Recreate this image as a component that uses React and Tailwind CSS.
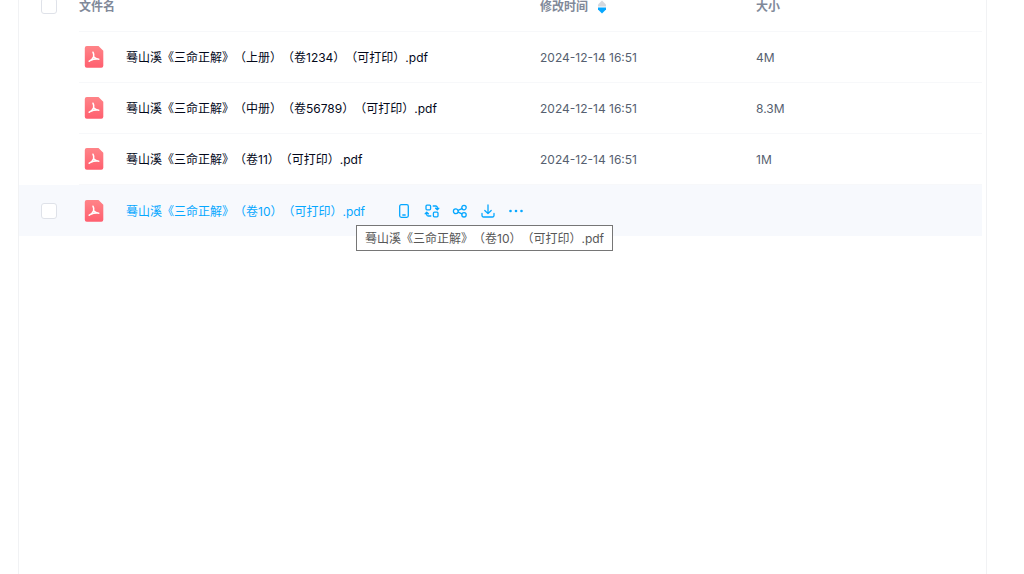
import React from 'react';

const files = [
  { name: '蓦山溪《三命正解》（上册）（卷1234）（可打印）.pdf', time: '2024-12-14 16:51', size: '4M' },
  { name: '蓦山溪《三命正解》（中册）（卷56789）（可打印）.pdf', time: '2024-12-14 16:51', size: '8.3M' },
  { name: '蓦山溪《三命正解》（卷11）（可打印）.pdf', time: '2024-12-14 16:51', size: '1M' },
  { name: '蓦山溪《三命正解》（卷10）（可打印）.pdf', time: '', size: '', active: true },
];

const PdfIcon = () => (
  <svg viewBox="0 0 20 24" className="w-5 h-6 shrink-0" aria-hidden="true">
    <defs>
      <linearGradient id="pdf-fill" x1="0" y1="0" x2="0" y2="1">
        <stop offset="0" stopColor="#ff8488" />
        <stop offset="1" stopColor="#ff5f6f" />
      </linearGradient>
    </defs>
    <path d="M2.800 1h11.700l4.800 4.800v15a2 2 0 0 1-2 2H2.800a2 2 0 0 1-2-2V3a2 2 0 0 1 2-2z" fill="url(#pdf-fill)" />
    <path d="M9 7.200c1 1.400.8 3.200.6 4.600M9.600 11.800c-.8 1.800-2.200 3.600-4.400 4.400M9.600 11.800c1.200 1.500 2.700 2.400 5.200 2.500M6.800 15.200c2-.9 4.200-1.300 6.400-1.200" fill="none" stroke="#fff" strokeWidth="1.500" strokeLinecap="round" strokeLinejoin="round" />
  </svg>
);

const iconProps = {
  viewBox: '0 0 16 16',
  className: 'w-4 h-4',
  fill: 'none',
  stroke: 'currentColor',
  strokeWidth: 1.3,
  strokeLinecap: 'round',
  strokeLinejoin: 'round',
  'aria-hidden': true,
};

const actions = [
  {
    label: '发送到手机',
    icon: (
      <svg {...iconProps}>
        <rect x="3.700" y="1.700" width="8.600" height="12.600" rx="1.500" />
        <path d="M6.800 12h2.400" />
      </svg>
    ),
  },
  {
    label: '转换',
    icon: (
      <svg {...iconProps}>
        <rect x="2" y="2.200" width="4.600" height="4.600" rx="1" />
        <rect x="9.400" y="9.200" width="4.600" height="4.600" rx="1" />
        <path d="M9.200 3h2.600a1.500 1.500 0 0 1 1.500 1.500v2M11.600 5.200l1.700 1.600 1.500-1.600M6.800 13H4.200a1.500 1.500 0 0 1-1.500-1.500v-2M1.200 10.800l1.500-1.600 1.700 1.600" />
      </svg>
    ),
  },
  {
    label: '分享',
    icon: (
      <svg {...iconProps}>
        <circle cx="3.800" cy="8.300" r="2.400" />
        <circle cx="12" cy="4.600" r="2.200" />
        <circle cx="12" cy="11.800" r="2.200" />
        <path d="M6.100 7.400l3.800-1.800M6.200 9.200l3.700 1.700" />
      </svg>
    ),
  },
  {
    label: '下载',
    icon: (
      <svg {...iconProps}>
        <path d="M8 2v8.500M4.800 7.500L8 10.600l3.200-3.100M2 10.500v2A1.500 1.500 0 0 0 3.500 14h9a1.500 1.500 0 0 0 1.500-1.500v-2" />
      </svg>
    ),
  },
  {
    label: '更多',
    icon: (
      <svg viewBox="0 0 16 16" className="w-4 h-4" fill="currentColor" aria-hidden="true">
        <circle cx="2.500" cy="8" r="1.300" />
        <circle cx="8" cy="8" r="1.300" />
        <circle cx="13.500" cy="8" r="1.300" />
      </svg>
    ),
  },
];

const CheckBox = ({ label }) => (
  <input
    type="checkbox"
    aria-label={label}
    className="block w-4 h-4 ml-[22px] appearance-none rounded-[3px] border border-[#dfe2e9] bg-white"
  />
);

const FileRow = ({ file }) => {
  const line = file.active ? '' : 'border-b border-[#f7f8fa]';
  return (
    <tr className={file.active ? 'h-[51px] bg-[#f7f9fd]' : 'h-[51px]'}>
      <td>{file.active && <CheckBox label={file.name} />}</td>
      <td className={line} colSpan={file.active ? 3 : 1}>
        <div className="relative flex items-center pl-[5px]">
          <PdfIcon />
          <a
            href="#file"
            className={file.active ? 'ml-[22px] pt-0.5 text-[#06a7ff]' : 'ml-[22px] pt-0.5 text-[#03081a]'}
          >
            {file.name}
          </a>
          {file.active && (
            <div className="flex gap-3 ml-[31px] text-[#06a7ff]">
              {actions.map((action) => (
                <button key={action.label} type="button" aria-label={action.label}>
                  {action.icon}
                </button>
              ))}
            </div>
          )}
          {file.active && (
            <div
              role="tooltip"
              className="absolute left-[277px] top-[26px] border border-[#767676] bg-white px-2 pt-[5px] pb-[3px] leading-4 text-[#575757] whitespace-nowrap"
            >
              {file.name}
            </div>
          )}
        </div>
      </td>
      {!file.active && <td className={`${line} pt-0.5`}>{file.time}</td>}
      {!file.active && <td className={`${line} pt-0.5`}>{file.size}</td>}
    </tr>
  );
};

const App = () => {
  return (
    <div className="h-screen overflow-hidden bg-white pl-[18px] pr-[37px] font-['Inter','Noto_Sans_CJK_SC',sans-serif] text-xs text-[#565f70] [text-spacing-trim:space-all]">
      <div className="h-full overflow-hidden border-x border-[#f1f2f4] pr-1">
        <table className="-mt-5 w-full table-fixed border-separate border-spacing-0 text-left">
          <colgroup>
            <col className="w-[60px]" />
            <col />
            <col className="w-[216px]" />
            <col className="w-[226px]" />
          </colgroup>
          <thead className="text-[#818999]">
            <tr className="h-[52px]">
              <th><CheckBox label="全选" /></th>
              <th className="border-b border-[#f7f8fa] pt-0.5 font-bold">文件名</th>
              <th className="border-b border-[#f7f8fa] pt-0.5 font-bold">
                <button type="button" className="flex items-center gap-[9px]">
                  修改时间
                  <svg viewBox="0 0 10 14" className="w-[10px] h-[14px]" aria-hidden="true">
                    <path d="M5 0.500L9 4.500V6.500H1V4.500z" fill="#d5d8de" />
                    <path d="M1 7.500H9V9.500L5 13.500L1 9.500z" fill="#06a7ff" />
                  </svg>
                </button>
              </th>
              <th className="border-b border-[#f7f8fa] pt-0.5 font-bold">大小</th>
            </tr>
          </thead>
          <tbody>
            {files.map((file) => (
              <FileRow key={file.name} file={file} />
            ))}
          </tbody>
        </table>
      </div>
    </div>
  );
};

export default App;
